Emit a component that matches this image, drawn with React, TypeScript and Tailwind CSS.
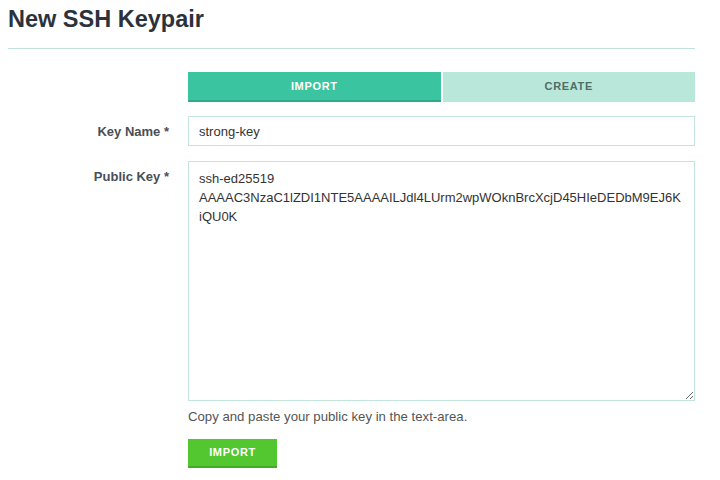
import React, { useState } from 'react';

const font = { fontFamily: '"Liberation Sans", Arial, sans-serif' };

const App: React.FC = () => {
  const [tab, setTab] = useState<'import' | 'create'>('import');
  const [name, setName] = useState('strong-key');
  const [key, setKey] = useState(
    'ssh-ed25519 AAAAC3NzaC1lZDI1NTE5AAAAILJdl4LUrm2wpWOknBrcXcjD45HIeDEDbM9EJ6KiQU0K'
  );

  return (
    <div className="min-h-screen bg-white px-2 pt-[4px]" style={font}>
      {/* Header */}
      <h1 className="text-[23.5px] leading-[30px] font-bold text-[#2b323c]">New SSH Keypair</h1>
      <div className="mt-[14px] mr-[17px] border-b border-[#bfe3d8]" />

      {/* Form */}
      <div className="mt-[23px] grid grid-cols-[161px_507px] gap-x-[19px]">
        <div />
        <div className="flex h-[30px] gap-[2px]">
          <button
            onClick={() => setTab('import')}
            className={`flex-1 text-[11px] font-bold tracking-[0.06em] border-b-2 ${
              tab === 'import'
                ? 'bg-[#3ac4a0] text-white border-[#2fab88]'
                : 'bg-[#b9e8db] text-[#4f6e66] border-[#a9dccd]'
            }`}
          >
            IMPORT
          </button>
          <button
            onClick={() => setTab('create')}
            className={`flex-1 text-[11px] font-bold tracking-[0.06em] border-b-2 ${
              tab === 'create'
                ? 'bg-[#3ac4a0] text-white border-[#2fab88]'
                : 'bg-[#b9e8db] text-[#4f6e66] border-[#b9e8db]'
            }`}
          >
            CREATE
          </button>
        </div>

        <label className="mt-[14px] pt-[6px] text-right text-[13px] font-bold text-[#4a4f55]">Key Name *</label>
        <input
          value={name}
          onChange={(e) => setName(e.target.value)}
          className="mt-[14px] h-[30px] border border-[#c3e4da] px-[10px] text-[13px] text-[#333] outline-none"
        />

        <label className="mt-[15px] pt-[6px] text-right text-[13px] font-bold text-[#4a4f55]">Public Key *</label>
        <div className="mt-[15px]">
          <textarea
            value={key}
            onChange={(e) => setKey(e.target.value)}
            className="block h-[240px] w-full border border-[#c3e4da] pl-[10px] pr-[12px] pt-[7px] text-[13px] leading-[19px] text-[#333] outline-none"
          />
          <p className="mt-[7px] text-[13.2px] leading-[18px] text-[#555]">
            Copy and paste your public key in the text-area.
          </p>
          <button className="mt-[13px] h-[29px] w-[89px] border-b-2 border-[#45ab26] bg-[#52c72f] text-[11px] font-bold tracking-[0.06em] text-white">
            IMPORT
          </button>
        </div>
      </div>
    </div>
  );
};

export default App;
